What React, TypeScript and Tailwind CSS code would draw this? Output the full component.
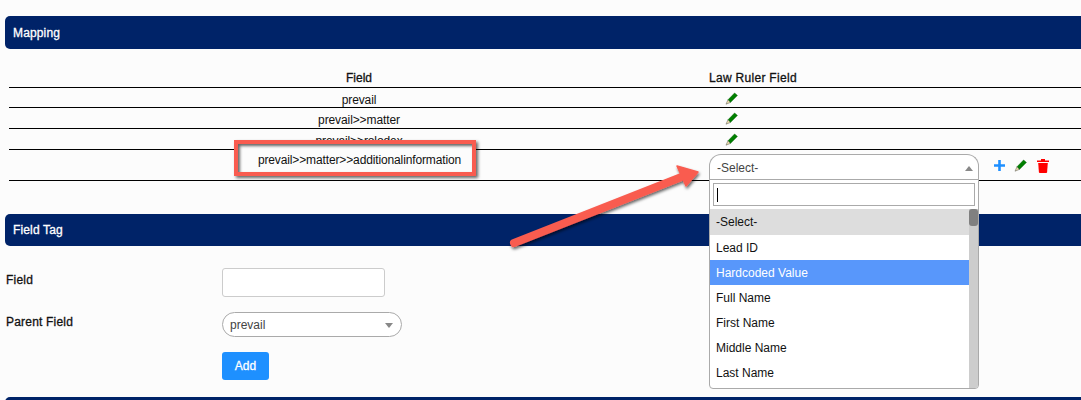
const NAVY = "bg-[#002368]";
const HEAVY = "[-webkit-text-stroke:0.3px_currentColor]";

const PencilIcon = () => (
  <svg width="13" height="13" viewBox="0 0 13 13" className="block">
    <path d="M3 7.8 L9.6 1 L12.4 3.4 L5.4 10.4 Z" fill="#008000" stroke="#055f05" strokeWidth="0.5" />
    <path d="M3 7.8 L5.4 10.4 L1 12.2 Z" fill="#efe2ac" stroke="#555" strokeWidth="0.5" />
  </svg>
);

const PlusIcon = () => (
  <svg width="13" height="13" viewBox="0 0 13 13" className="block">
    <path d="M6.5 1v11M1 6.5h11" stroke="#1e8fff" strokeWidth="2.6" />
  </svg>
);

const TrashIcon = () => (
  <svg width="14" height="15" viewBox="0 0 14 15" className="block">
    <path d="M1 2.5h12v1.6H1z M5 1h4v1.5H5z" fill="#ff0000" />
    <path d="M2.2 5h9.6l-.7 9.2q-.1.8-.9.8H3.8q-.8 0-.9-.8z" fill="#ff0000" />
  </svg>
);

const SectionBar = ({ title, className = "" }: { title: string; className?: string }) => (
  <div className={`${NAVY} ${HEAVY} ml-[5px] rounded-l-[5px] flex items-center pl-2 text-white text-[12px] tracking-[0.15px] ${className}`}>
    {title}
  </div>
);

const rows = ["prevail", "prevail>>matter", "prevail>>rolodex"];
const options = ["Lead ID", "Hardcoded Value", "Full Name", "First Name", "Middle Name", "Last Name"];

export default function App() {
  return (
    <div className="relative w-[1081px] h-[400px] overflow-hidden bg-[#fcfcfc] pt-4 text-[12px] text-[#111] font-['Liberation_Sans',Arial,sans-serif]">
      <div className="h-[33px] flex flex-col [&>div]:flex-1">
        <SectionBar title="Mapping" />
      </div>

      {/* Mapping table */}
      <div className="ml-[9px] mt-[20px]">
        <div className={`grid grid-cols-[700px_87px_1fr] h-[19px] items-center border-b border-black whitespace-nowrap ${HEAVY}`}>
          <span className="text-center">Field</span>
          <span className="text-center tracking-[0.3px]">Law Ruler Field</span>
        </div>
        {rows.map((name, i) => (
          <div key={name} className={`grid grid-cols-[700px_87px_1fr] items-center border-b border-black ${i === 0 ? "h-[20px]" : "h-[21px]"}`}>
            <span className="text-center pt-[3px] tracking-[-0.1px]">{name}</span>
            <span className="flex justify-center -ml-[42px]"><PencilIcon /></span>
          </div>
        ))}
        <div className="grid grid-cols-[700px_1fr] h-[31px] border-b border-black">
          <span />
          <div className="relative flex items-start pt-[4px]">
            <div className="w-[270px] h-[27px] shrink-0 flex items-center justify-between bg-white border border-b-0 border-[#aaaaaa] rounded-t-[12px] pl-[7px] pr-[5px] text-[#444]">
              <span>-Select-</span>
              <span className="w-0 h-0 border-x-[4px] border-x-transparent border-b-[5px] border-b-[#888]" />
            </div>
            <div className="flex items-center ml-[14px] pt-[4px]">
              <PlusIcon />
              <span className="ml-[8px]"><PencilIcon /></span>
              <span className="ml-[9px]"><TrashIcon /></span>
            </div>

            {/* Open dropdown */}
            <div className="absolute left-0 top-[29px] z-10 w-[270px] h-[210px] bg-white border border-[#aaaaaa] rounded-b-[4px] overflow-hidden">
              <div className="p-[3px]">
                <div className="h-[23px] border border-[#aaaaaa] flex items-center pl-[3px]">
                  <span className="w-px h-[14px] bg-black" />
                </div>
              </div>
              <div className="flex h-[179px]">
                <div className="flex-1">
                  <div className="h-[26px] bg-[#dddddd] flex items-center pl-[6px]">-Select-</div>
                  {options.map((o) => (
                    <div key={o} className={`h-[25px] flex items-center pl-[6px] ${o === "Hardcoded Value" ? "bg-[#5897fb] text-white" : ""}`}>
                      {o}
                    </div>
                  ))}
                </div>
                <div className="w-[9px] bg-[#cdcdcd]">
                  <div className="h-[17px] bg-[#808080] rounded-[3px]" />
                </div>
              </div>
            </div>
          </div>
        </div>
      </div>

      {/* Field Tag */}
      <div className="h-[32px] mt-[33px] flex flex-col [&>div]:flex-1">
        <SectionBar title="Field Tag" className="pb-px" />
      </div>
      <div className="ml-[6px] mt-[22px] grid grid-cols-[216px_1fr]">
        <span className={`pt-[3px] ${HEAVY} tracking-[0.2px]`}>Field</span>
        <div className="w-[163px] h-[29px] bg-white border border-[#cccccc] rounded-[3px]" />
        <span className={`mt-[15px] pt-px ${HEAVY} tracking-[0.2px]`}>Parent Field</span>
        <div className="mt-[15px] w-[180px] h-[25px] bg-white border border-[#aaaaaa] rounded-full flex items-center justify-between pl-[7px] pr-2 pt-px text-[#444]">
          <span>prevail</span>
          <span className="w-0 h-0 border-x-[4px] border-x-transparent border-t-[5px] border-t-[#888]" />
        </div>
        <span />
        <button className={`mt-[15px] w-[47px] h-[28px] bg-[#1e90ff] rounded-[3px] text-white text-[12px] ${HEAVY}`}>Add</button>
      </div>
      <div className={`${NAVY} absolute left-[5px] right-0 top-[397px] h-[10px] rounded-tl-[5px]`} />

      {/* Annotation: red box */}
      <div className="absolute left-[234px] top-[140px] w-[242px] h-[36px] border-[4px] border-[#f95c50] bg-[#fcfcfc] flex items-center justify-center pt-[3px] shadow-[2px_2px_3px_rgba(0,0,0,0.6),inset_2px_2px_3px_rgba(0,0,0,0.6)]">
        <span className="ml-[9px] tracking-[-0.13px]">prevail&gt;&gt;matter&gt;&gt;additionalinformation</span>
      </div>

      {/* Annotation: arrow */}
      <svg className="absolute left-0 top-0 pointer-events-none" width="1081" height="400" viewBox="0 0 1081 400">
        <defs>
          <filter id="arrowShadow" x="-10%" y="-30%" width="120%" height="160%">
            <feDropShadow dx="1" dy="2" stdDeviation="1.5" floodColor="#000" floodOpacity="0.6" />
          </filter>
        </defs>
        <g filter="url(#arrowShadow)" fill="#f95c50">
          <path d="M514 243 L684 176" stroke="#f95c50" strokeWidth="8" strokeLinecap="round" />
          <path d="M698 172 L677 166 L686 186 Z" stroke="#f95c50" strokeWidth="1.5" strokeLinejoin="round" />
        </g>
      </svg>
    </div>
  );
}
